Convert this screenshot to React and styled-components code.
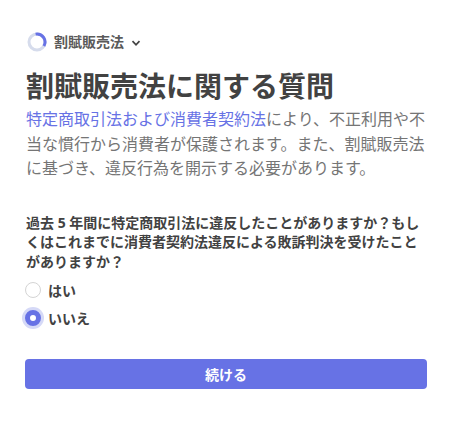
import React, { useState } from 'react';
import styled, { createGlobalStyle } from 'styled-components';

const GlobalStyle = createGlobalStyle`
  html, body {
    margin: 0;
    padding: 0;
    background: #fff;
  }
  body {
    font-family: "Noto Sans", "Noto Sans CJK JP", sans-serif;
    color: #424770;
  }
`;

const Page = styled.div`
  width: 460px;
  height: 435px;
  box-sizing: border-box;
  padding: 30px 33px 0 25px;
  overflow: hidden;
`;

const Stepper = styled.div`
  display: flex;
  align-items: center;
  height: 24px;
  padding-left: 2px;
  gap: 7px;
`;

const StepName = styled.span`
  font-size: 14px;
  line-height: 24px;
  font-weight: 600;
  color: #5a5a5a;
`;

const Chevron = styled.svg`
  width: 10px;
  height: 10px;
  margin-top: 2px;
`;

const Title = styled.h1`
  margin: 12px 0 0 1px;
  font-size: 28px;
  line-height: 41px;
  font-weight: 700;
  color: #424242;
`;

const Intro = styled.p`
  margin: 0 0 0 1px;
  font-size: 16px;
  line-height: 24.5px;
  color: #757575;
`;

const IntroLink = styled.a`
  color: #6772e5;
  text-decoration: none;
`;

const Question = styled.p`
  margin: 32px 0 0 1px;
  font-size: 14px;
  line-height: 19.6px;
  font-weight: 700;
  color: #424242;
`;

const Options = styled.div`
  display: flex;
  flex-direction: column;
  margin-top: 5px;
`;

const Option = styled.label`
  display: flex;
  align-items: center;
  height: 28px;
  gap: 7px;
  font-size: 14px;
  font-weight: 700;
  color: #424242;
  cursor: pointer;
`;

const RadioInput = styled.span`
  width: 16px;
  height: 16px;
  box-sizing: border-box;
  border-radius: 50%;
  flex: none;
  border: ${(props) => (props.checked ? '5px solid #6772e5' : '1px solid #d4d4d4')};
  background: #fff;
  box-shadow: ${(props) => (props.checked ? '0 0 0 3px #d5d9f7' : 'none')};
`;

const SubmitButton = styled.button`
  display: block;
  width: 100%;
  height: 30px;
  margin-top: 27px;
  border: 0;
  border-radius: 4px;
  background: #6772e5;
  color: #fff;
  font-family: inherit;
  font-size: 14px;
  font-weight: 700;
  cursor: pointer;
`;

const Progress = () => (
  <svg width="20" height="20" viewBox="0 0 20 20">
    <circle cx="10" cy="10" r="8" fill="none" stroke="#d6dcec" strokeWidth="3" />
    <path d="M8.6 2.12 A8 8 0 0 1 16.9 14" fill="none" stroke="#6772e5" strokeWidth="3" />
  </svg>
);

const App = () => {
  const [answer, setAnswer] = useState('no');

  return (
    <Page>
      <GlobalStyle />
      <Stepper>
        <Progress />
        <StepName>割賦販売法</StepName>
        <Chevron viewBox="0 0 10 10">
          <path d="M1.5 3.2 L5 6.8 L8.5 3.2" fill="none" stroke="#424242" strokeWidth="1.7" />
        </Chevron>
      </Stepper>
      <Title>割賦販売法に関する質問</Title>
      <Intro>
        <IntroLink href="#">特定商取引法および消費者契約法</IntroLink>
        により、不正利用や不当な慣行から消費者が保護されます。また、割賦販売法に基づき、違反行為を開示する必要があります。
      </Intro>
      <Question>
        過去 5 年間に特定商取引法に違反したことがありますか？もしくはこれまでに消費者契約法違反による敗訴判決を受けたことがありますか？
      </Question>
      <Options>
        <Option onClick={() => setAnswer('yes')}>
          <RadioInput checked={answer === 'yes'} />
          はい
        </Option>
        <Option onClick={() => setAnswer('no')}>
          <RadioInput checked={answer === 'no'} />
          いいえ
        </Option>
      </Options>
      <SubmitButton>続ける</SubmitButton>
    </Page>
  );
};

export default App;
